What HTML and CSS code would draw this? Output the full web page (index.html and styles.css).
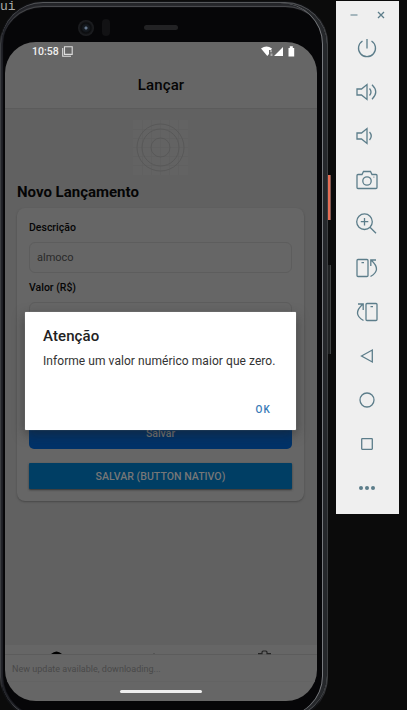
FILE: index.html
```html
<!DOCTYPE html>
<html lang="pt-BR">
<head>
<meta charset="utf-8">
<title>Lançar</title>
<link rel="stylesheet" href="styles.css">
</head>
<body>
<span class="terminal">ui</span>
<main class="workspace">
  <div class="phone">
    <div class="bezel">
      <div class="hardware"><i class="camera"></i><i class="sensor"></i><i class="speaker"></i></div>
      <div class="screen">
        <header class="status">
          <span>10:58</span>
          <svg class="copy" width="11" height="11" viewBox="0 0 11 11"><path d="M2.5.7h7.7v7.7H2.5zM.7 2v8.2H9" /></svg>
          <svg class="signals" width="35" height="11" viewBox="0 0 35 11"><path d="M0 2.600Q5.500-1.800 11 2.600L10 4H8v4L6.300 10ZM13 10 22 1v9ZM27.500 2h1.300V.3h3V2h1.400v8.500h-5.700Z"/><path class="dim" d="M9 4.200h2v2H9zM9.500 7.500h2V10h-2z"/></svg>
        </header>
        <h1 class="title">Lançar</h1>
        <section class="content">
          <svg class="logo" width="55" height="55" viewBox="0 0 55 55"><rect width="55" height="55"/><path d="M9.500 0v55M18.500 0v55M27.500 0v55M36.500 0v55M45.500 0v55M0 9.500h55M0 18.500h55M0 27.500h55M0 36.500h55M0 45.500h55"/><circle cx="27.500" cy="27.500" r="23.500"/><circle cx="27.500" cy="27.500" r="18.500"/><circle cx="27.500" cy="27.500" r="9.500"/></svg>
          <h2>Novo Lançamento</h2>
          <div class="card">
            <label>Descrição</label>
            <div class="field">almoco</div>
            <label>Valor (R$)</label>
            <div class="field"></div>
            <div class="save">Salvar</div>
            <div class="native">SALVAR (BUTTON NATIVO)</div>
          </div>
        </section>
        <nav class="tabs">
          <svg width="312" height="10" viewBox="0 0 312 10"><path d="M46 9Q51.500 4 57 9Z"/><path class="gear" d="M253 8.700h4V7l1-1h3l1 1v1.700h4"/><path class="gear faint" d="M148 8.500h2"/></svg>
        </nav>
        <div class="update">New update available, downloading...</div>
        <div class="home"><i></i></div>
        <div class="dialog">
          <h3>Atenção</h3>
          <p>Informe um valor numérico maior que zero.</p>
          <button>OK</button>
        </div>
      </div>
    </div>
    <i class="power-key"></i><i class="volume-key"></i>
  </div>
  <aside class="toolbar">
    <div class="window"><svg width="63" height="28" viewBox="0 0 63 28"><path class="minimize" d="M14.500 14h7"/><path d="m42 11 6 6m0-6-6 6"/></svg></div>
    <svg viewBox="0 0 24 24"><path d="M7.500 5a8.500 8.500 0 1 0 9 0M12 3v9.500"/></svg>
    <svg viewBox="0 0 24 24"><path d="M2 9h4.500L12 4.500v15L6.500 15H2zM14.500 8.500q3 3.500 0 7M17 4.800q7.500 7.200 0 14.400"/></svg>
    <svg viewBox="0 0 24 24"><path d="M2 9h4.500L12 4.500v15L6.500 15H2zM14.500 8q3.500 4 0 8"/></svg>
    <svg viewBox="0 0 24 24"><path d="M3 6.500h4L8.500 3.500h7L17 6.500h4q1 0 1 1v12q0 1-1 1H3q-1 0-1-1v-12q0-1 1-1Z"/><circle cx="12" cy="13" r="4.200"/><path d="M18.500 9.200h.8"/></svg>
    <svg viewBox="0 0 24 24"><circle cx="9.500" cy="9.700" r="7.800"/><path d="m15 15.200 6 6M9.500 6v7.500M5.800 9.700h7.500"/></svg>
    <svg viewBox="0 0 24 24"><rect x="2" y="3.500" width="11" height="17" rx="1"/><path d="M6.500 6.700h2.500M15.500 20.500Q27 14 16.500 4.500M15.800 10V4H21"/></svg>
    <svg viewBox="0 0 24 24"><rect x="11" y="3.500" width="11" height="17" rx="1"/><path d="M15.500 6.700H18M8.500 20.500Q-3 14 7.500 4.500M8.200 10V4H3"/></svg>
    <svg viewBox="0 0 24 24"><path d="m6.500 12 10.800-6v12Z"/></svg>
    <svg viewBox="0 0 24 24"><circle cx="12" cy="12" r="7"/></svg>
    <svg viewBox="0 0 24 24"><rect x="6.700" y="6.700" width="10.600" height="10.600" rx=".5"/></svg>
    <svg class="more" viewBox="0 0 24 24"><circle cx="6" cy="12" r="2"/><circle cx="12" cy="12" r="2"/><circle cx="18" cy="12" r="2"/></svg>
  </aside>
</main>
</body>
</html>
```
FILE: styles.css
```css
* { box-sizing: border-box; }
body { margin: 0; height: 710px; overflow: hidden; background: #0b0b0b; font-family: Roboto, sans-serif; color: #050505; }
h1, h2, h3, p { margin: 0; }
i { display: block; }
.terminal { position: absolute; left: 0; top: 0; font: 13px/13px "Liberation Mono", monospace; color: #aaa; }
.workspace { display: flex; align-items: flex-start; gap: 8px; height: 710px; overflow: hidden; }
.phone { position: relative; flex: none; width: 328px; height: 719px; margin-top: 1px; padding: 1px; border-radius: 43px; background: linear-gradient(90deg, #44464a 0, #101114 3px, #101114 316px, #252629 322px, #3e4042 327px); }
.bezel { height: 716px; padding: 0 7px 0 4px; border: 1px solid #56585b; border-left-width: 0; border-right: 0; border-radius: 42px; background: #060608; box-shadow: inset -4px 0 0 #25272a, inset -5px 0 0 #77797d, inset 2px 0 1px #222329, inset 0 3px 1px #242529, inset 0 4px 1px #56575b; }
.hardware { display: flex; height: 39px; align-items: center; padding: 10px 0 0 73px; }
.camera { width: 16px; height: 16px; border-radius: 50%; background: radial-gradient(circle, #66788e 0 1px, #151a20 2px 3px, #0b0c0e 5px, #1b1c1f 7px); }
.sensor { width: 8px; height: 17px; margin-left: 8px; border-radius: 4px; background: #121214; }
.speaker { width: 34px; height: 5px; margin-left: 34px; border-radius: 3px; background: #222224; }
.screen { position: relative; display: flex; flex-direction: column; width: 312px; height: 659px; border-radius: 31px; overflow: hidden; background: #666; }
.status { display: flex; align-items: center; height: 18px; padding: 0 21px 0 27px; color: #f0f0f0; font-size: 10.5px; font-weight: 500; }
.copy { margin-left: 3px; fill: none; stroke: #ddd; stroke-width: 1.1; }
.signals { margin-left: auto; fill: #fff; }
.signals .dim { fill: #aaa; }
.title { height: 48px; line-height: 50px; text-align: center; font-size: 15px; font-weight: 500; letter-spacing: .15px; }
.content { flex: 1; padding: 11px 13px 0 12px; background: #616161; border-top: 1px solid #5b5b5b; }
.logo { display: block; margin: 0 auto; fill: none; }
.logo rect { fill: #636363; }
.logo path { stroke: #606060; stroke-width: .8; }
.logo circle { stroke: #575757; stroke-width: .9; }
h2 { height: 33px; line-height: 34px; font-size: 15px; font-weight: 700; }
.card { height: 293px; padding: 12px; border-radius: 8px; background: #666; box-shadow: 0 1px 2px #484848; }
label { display: block; height: 15px; line-height: 15px; font-size: 10.5px; font-weight: 500; }
.field { height: 31px; margin: 7px 0; padding-left: 7px; border: 1px solid #5d5d5d; border-radius: 6px; line-height: 30px; font-size: 11px; color: #292929; }
.save { height: 34px; margin-top: 82px; border-radius: 5px; background: #003268; line-height: 37px; text-align: center; font-size: 10.5px; font-weight: 500; color: #777; }
.native { height: 26px; margin-top: 14px; border-radius: 1px; background: #003e64; box-shadow: 0 1px 2px #333; line-height: 27px; text-align: center; font-size: 10.6px; font-weight: 500; color: #777; }
.tabs { height: 10px; border-bottom: 1px solid #5c5c5c; }
.tabs svg { display: block; }
.gear { fill: none; stroke: #252525; stroke-width: 1.2; }
.faint { stroke: #555; }
.update { height: 27px; padding-left: 7px; border-bottom: 1px solid #636363; line-height: 28px; font-size: 9px; letter-spacing: .02px; color: #494949; }
.home { height: 19px; display: flex; justify-content: center; padding-top: 8px; }
.home i { width: 82px; height: 3px; margin-right: 1px; border-radius: 2px; background: #eee; }
.dialog { position: absolute; left: 20px; top: 270px; width: 271px; height: 118px; padding: 15px 18px; border-radius: 1px; background: #fff; box-shadow: 0 4px 12px #2228, 0 0 1px #ddd; color: #222; }
h3 { height: 19px; line-height: 19px; font-size: 15px; font-weight: 500; letter-spacing: .1px; }
.dialog p { margin-top: 6px; line-height: 18px; white-space: nowrap; font-size: 12px; letter-spacing: .06px; color: #333; }
button { display: block; margin: 31px 7px 0 auto; padding: 0; border: 0; background: none; font: 500 10px/18px Roboto, sans-serif; letter-spacing: 1.2px; color: #397bb7; }
.power-key, .volume-key { position: absolute; left: 328px; width: 2px; }
.power-key { top: 174px; height: 45px; background: #e66e55; box-shadow: 1px 0 #80564d; }
.volume-key { top: 264px; height: 89px; background: #202223; box-shadow: 1px 0 #414343; }
.toolbar { display: flex; flex-direction: column; align-items: center; gap: 20px; width: 63px; height: 513px; margin-top: 1px; padding-right: 1px; background: #efefef; }
.toolbar svg { display: block; flex: none; width: 24px; height: 24px; fill: none; stroke: #5c7d8a; stroke-width: 1.3; }
.toolbar .window { height: 15px; }
.toolbar .window svg { width: 63px; height: 28px; }
.toolbar .minimize { stroke: #8ca3ac; stroke-width: 1.5; }
.toolbar .more { fill: #5c7d8a; stroke: none; }
```
